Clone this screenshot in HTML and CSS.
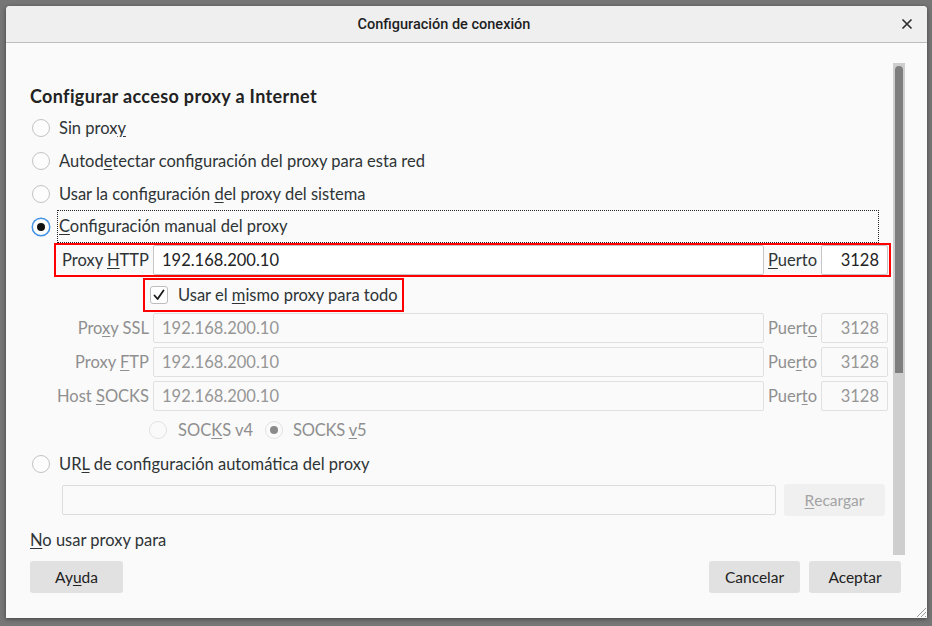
FILE: index.html
```html
<!DOCTYPE html>
<html lang="es">
<head>
<meta charset="utf-8">
<title>Configuración de conexión</title>
<link rel="stylesheet" href="styles.css">
</head>
<body>
<div class="window">
  <div class="titlebar">
    <span class="title">Configuración de conexión</span>
    <span class="close">
      <svg width="12" height="12" viewBox="0 0 12 12"><path d="M1.5 1.5 L10.5 10.5 M10.5 1.5 L1.5 10.5" stroke="#2b2b2b" stroke-width="1.6" fill="none"/></svg>
    </span>
  </div>
  <div class="main">
    <div class="scroller">
      <div class="content">
        <h1 class="heading">Configurar acceso proxy a Internet</h1>
        <div class="radio-row"><span class="radio"></span><span class="label">Sin prox<u>y</u></span></div>
        <div class="radio-row"><span class="radio"></span><span class="label">Autod<u>e</u>tectar configuración del proxy para esta red</span></div>
        <div class="radio-row"><span class="radio"></span><span class="label">Usar la configuración <u>d</u>el proxy del sistema</span></div>
        <div class="radio-row"><span class="radio checked focus"></span><span class="label focused"><u>C</u>onfiguración manual del proxy</span></div>

        <div class="proxy-row highlight">
          <span class="plabel">Proxy <u>H</u>TTP</span>
          <span class="input">192.168.200.10</span>
          <span class="port-label"><u>P</u>uerto</span>
          <span class="input port">3128</span>
        </div>
        <div class="check-row">
          <div class="check-box highlight">
            <span class="checkbox">
              <svg width="14" height="14" viewBox="0 0 14 14"><path d="M2.5 7.5 L5.6 11 L11.5 2.5" stroke="#1a1a1a" stroke-width="1.8" fill="none" stroke-linecap="round" stroke-linejoin="round"/></svg>
            </span>
            <span class="label">Usar el <u>m</u>ismo proxy para todo</span>
          </div>
        </div>
        <div class="proxy-row disabled">
          <span class="plabel">Pro<u>x</u>y SSL</span>
          <span class="input">192.168.200.10</span>
          <span class="port-label">Puert<u>o</u></span>
          <span class="input port">3128</span>
        </div>
        <div class="proxy-row disabled">
          <span class="plabel">Proxy <u>F</u>TP</span>
          <span class="input">192.168.200.10</span>
          <span class="port-label">Pue<u>r</u>to</span>
          <span class="input port">3128</span>
        </div>
        <div class="proxy-row disabled">
          <span class="plabel">Host <u>S</u>OCKS</span>
          <span class="input">192.168.200.10</span>
          <span class="port-label">Puer<u>t</u>o</span>
          <span class="input port">3128</span>
        </div>
        <div class="socks-row">
          <span class="radio disabled"></span><span class="label dim">SOC<u>K</u>S v4</span>
          <span class="radio disabled checked-dim"></span><span class="label dim">SOCKS <u>v</u>5</span>
        </div>
        <div class="radio-row"><span class="radio"></span><span class="label">UR<u>L</u> de configuración automática del proxy</span></div>
        <div class="url-row">
          <span class="input url"></span>
          <span class="btn disabled-btn"><u>R</u>ecargar</span>
        </div>
        <div class="noproxy"><u>N</u>o usar proxy para</div>
      </div>
      <div class="scrollbar"><div class="thumb"></div></div>
    </div>
    <div class="footer">
      <span class="btn"><span>Ay<u>u</u>da</span></span>
      <div class="footer-right">
        <span class="btn">Cancelar</span>
        <span class="btn">Aceptar</span>
      </div>
    </div>
    <span class="grip">
      <svg width="14" height="14" viewBox="0 0 14 14"><path d="M13 4 L4 13 M13 8 L8 13 M13 12 L12 13" stroke="#9a9a9a" stroke-width="1" fill="none"/></svg>
    </span>
  </div>
</div>
</body>
</html>
```
FILE: styles.css
```css
html, body {
  margin: 0;
  padding: 0;
}
body {
  width: 932px;
  height: 626px;
  background: #767676;
  font-family: "Lato", "Noto Sans", sans-serif;
  color: #2e3436;
  overflow: hidden;
}
.window {
  position: absolute;
  left: 6px;
  top: 6px;
  width: 921px;
  height: 612px;
  background: #fafafa;
  border-radius: 4px 4px 0 0;
  box-shadow: 0 1px 4px rgba(0,0,0,0.45);
  display: flex;
  flex-direction: column;
}
.titlebar {
  height: 36px;
  flex: none;
  background: #efefef;
  border-bottom: 1px solid #bdbdbd;
  border-radius: 4px 4px 0 0;
  display: flex;
  align-items: center;
  justify-content: center;
  padding-right: 45px;
  position: relative;
}
.title {
  font-family: "Roboto", sans-serif;
  font-weight: 500;
  font-size: 14.5px;
  color: #1e1e1e;
}
.close {
  position: absolute;
  right: 14px;
  top: 12px;
  width: 12px;
  height: 12px;
  display: flex;
}
.main {
  flex: 1;
  display: flex;
  flex-direction: column;
  padding: 20px 22px 0 24px;
  position: relative;
}
.scroller {
  height: 492px;
  display: flex;
}
.content {
  flex: 1;
  overflow: hidden;
  font-size: 16.5px;
}
.scrollbar {
  width: 12px;
  background: #cecece;
  flex: none;
  display: flex;
  justify-content: center;
  padding-top: 3px;
  box-sizing: border-box;
}
.thumb {
  width: 8px;
  height: 307px;
  background: #7e7e7e;
  border-radius: 4px 4px 0 0;
}
u {
  text-decoration: underline;
  text-underline-offset: 2px;
}
.heading {
  margin: 0;
  padding-top: 21px;
  height: 48px;
  box-sizing: border-box;
  font-size: 18px;
  letter-spacing: 0.35px;
  font-weight: 700;
  line-height: 24px;
  color: #222;
}
.radio-row {
  height: 33px;
  display: flex;
  align-items: center;
  padding-left: 2px;
}
.radio {
  width: 18px;
  height: 18px;
  box-sizing: border-box;
  border: 1px solid #c3c3c3;
  border-radius: 50%;
  background: #fdfdfd;
  flex: none;
  margin-right: 9px;
  display: flex;
  align-items: center;
  justify-content: center;
}
.radio.checked::after {
  content: "";
  width: 8px;
  height: 8px;
  border-radius: 50%;
  background: #111;
}
.radio.focus {
  border-color: #3b8ee6;
  box-shadow: 0 0 0 0.5px #3b8ee6;
}
.label {
  line-height: 20px;
  white-space: nowrap;
}
.label.focused {
  flex: 1;
  outline: 1px dotted #222;
  outline-offset: 0;
  height: 31px;
  line-height: 31px;
  margin-right: 15px;
  margin-left: -1px;
  padding-left: 1px;
}
.proxy-row {
  margin-left: 24px;
  width: 837px;
  height: 34px;
  display: grid;
  grid-template-columns: 99px 611px 57px 67px;
  align-items: center;
}
.highlight {
  outline: 2px solid #ff0000;
  outline-offset: -2px;
}
.plabel {
  text-align: right;
  padding-right: 4px;
  white-space: nowrap;
}
.port-label {
  padding-left: 4px;
}
.input {
  height: 30px;
  box-sizing: border-box;
  border: 1px solid #c6c6c6;
  border-radius: 2px;
  background: #fff;
  display: flex;
  align-items: center;
  padding-left: 8px;
  color: #222;
}
.input.port {
  justify-content: flex-end;
  padding: 0 8px 0 0;
}
.disabled .plabel,
.disabled .port-label,
.dim {
  color: #8f8f8f;
}
.disabled .input {
  border-color: #e0e0e0;
  background: #fafafa;
  color: #969696;
}
.check-row {
  height: 34px;
  display: flex;
  align-items: center;
  padding-left: 113px;
}
.check-box {
  width: 261px;
  height: 34px;
  box-sizing: border-box;
  display: flex;
  align-items: center;
  padding-left: 7px;
  margin-top: 2px;
}
.checkbox {
  width: 18px;
  height: 18px;
  box-sizing: border-box;
  border: 1px solid #bdbdbd;
  border-radius: 3px;
  background: #fff;
  display: flex;
  align-items: center;
  justify-content: center;
  margin-right: 10px;
}
.socks-row {
  height: 34px;
  display: flex;
  align-items: center;
  padding-left: 119px;
}
.radio.disabled {
  border-color: #e2e2e2;
  background: #fafafa;
  margin-right: 10px;
}
.radio.disabled:first-child {
  margin-right: 11px;
}
.socks-row .label.dim:nth-child(2) {
  margin-right: 12px;
}
.socks-row .label.dim:last-child {
  letter-spacing: -0.2px;
}
.radio.checked-dim::after {
  content: "";
  width: 8px;
  height: 8px;
  border-radius: 50%;
  background: #8a8a8a;
}
.url-row {
  height: 36px;
  display: flex;
  align-items: center;
  padding-left: 32px;
  margin-top: 2px;
}
.input.url {
  width: 714px;
  border-color: #dcdcdc;
  background: #fafafa;
}
.btn {
  height: 32px;
  box-sizing: border-box;
  background: #e1e1e1;
  border-radius: 3px;
  display: flex;
  align-items: center;
  justify-content: center;
  font-size: 15.5px;
  color: #222;
}
.disabled-btn {
  width: 101px;
  margin-left: 8px;
  background: #f0f0f0;
  color: #a3a3a3;
}
.noproxy {
  height: 38px;
  line-height: 38px;
  margin-top: 3px;
}
.footer {
  height: 32px;
  margin-top: 6px;
  display: flex;
  justify-content: space-between;
  padding-right: 4px;
}
.footer > .btn {
  width: 93px;
}
.footer-right {
  display: flex;
  gap: 9px;
}
.footer-right .btn:first-child {
  width: 91px;
}
.footer-right .btn:last-child {
  width: 92px;
}
.grip {
  position: absolute;
  right: 0;
  bottom: 0;
  width: 14px;
  height: 14px;
  display: flex;
}
```
